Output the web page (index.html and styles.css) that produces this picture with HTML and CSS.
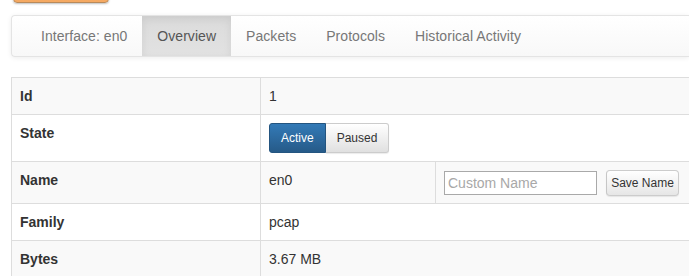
FILE: index.html
```html
<!DOCTYPE html>
<html>
<head>
    <title>Interface en0</title>
    <meta name="viewport" content="width=device-width, initial-scale=1">
    <link rel="stylesheet" href="styles.css">
</head>
<body>
    <div class="page">
        <div class="top-btn"></div>

        <nav class="navbar">
            <ul class="nav">
                <li><a href="#">Interface: en0</a></li>
                <li class="active"><a href="#">Overview</a></li>
                <li><a href="#">Packets</a></li>
                <li><a href="#">Protocols</a></li>
                <li><a href="#">Historical Activity</a></li>
            </ul>
        </nav>

        <table class="info-table">
            <colgroup>
                <col class="col-label">
                <col class="col-value">
                <col>
            </colgroup>
            <tr>
                <th>Id</th>
                <td colspan="2">1</td>
            </tr>
            <tr>
                <th>State</th>
                <td colspan="2">
                    <div class="btn-group">
                        <button class="btn btn-primary">Active</button><button class="btn btn-default">Paused</button>
                    </div>
                </td>
            </tr>
            <tr>
                <th>Name</th>
                <td>en0</td>
                <td>
                    <div class="name-form">
                        <input type="text" class="name-input" placeholder="Custom Name">
                        <button class="btn btn-default btn-save">Save Name</button>
                    </div>
                </td>
            </tr>
            <tr>
                <th>Family</th>
                <td colspan="2">pcap</td>
            </tr>
            <tr>
                <th>Bytes</th>
                <td colspan="2">3.67 MB</td>
            </tr>
        </table>
    </div>
</body>
</html>
```

FILE: styles.css
```css
* {
    box-sizing: border-box;
}

html, body {
    overflow: hidden;
}

body {
    margin: 0;
    background: #fff;
    color: #333;
    font-family: "Liberation Sans", Arial, Helvetica, sans-serif;
    font-size: 14px;
    line-height: 20px;
}

/* the page is cropped on the right, so the right edges have no border */
.page {
    padding-left: 11px;
}

.top-btn {
    width: 96px;
    height: 34px;
    margin-top: -31px;
    margin-left: 2px;
    background: linear-gradient(#f0ad4e, #f5a963);
    border: 1px solid #b98a5a;
    border-radius: 4px;
    box-shadow: 0 1px 2px rgba(0, 0, 0, 0.25);
}

.navbar {
    margin-top: 12px;
    margin-bottom: 20px;
    height: 42px;
    background: linear-gradient(#ffffff, #f8f8f8);
    border: 1px solid #e4e4e4;
    border-right: none;
    border-radius: 4px 0 0 4px;
    box-shadow: inset 0 1px 0 rgba(255, 255, 255, 0.15), 0 1px 5px rgba(0, 0, 0, 0.075);
}

.nav {
    display: flex;
    list-style: none;
    margin: 0;
    padding: 0 0 0 14px;
}

.nav a {
    display: block;
    padding: 10px 15px;
    color: #777;
    text-decoration: none;
    letter-spacing: 0.05px;
}

.nav .active a {
    color: #555;
    background: linear-gradient(#dbdbdb, #e2e2e2);
    box-shadow: inset 0 3px 9px rgba(0, 0, 0, 0.075);
}

.info-table {
    width: 100%;
    border-collapse: collapse;
    table-layout: fixed;
    border: 1px solid #ddd;
    border-right: none;
}

.col-label {
    width: 249px;
}

.col-value {
    width: 175px;
}

.info-table th,
.info-table td {
    padding: 8px;
    border: 1px solid #ddd;
    text-align: left;
    vertical-align: top;
    line-height: 20px;
}

.info-table td:last-child {
    border-right: none;
}

.info-table th {
    font-weight: bold;
}

.info-table tr:nth-child(odd) {
    background: #f9f9f9;
}

.btn-group {
    display: flex;
}

.btn {
    font-family: inherit;
    font-size: 12px;
    line-height: 18px;
    padding: 5px 11px;
    height: 30px;
    border: 1px solid #ccc;
    cursor: pointer;
}

.btn-primary {
    color: #fff;
    background: linear-gradient(#337ab7, #265a88);
    border-color: #245580;
    border-radius: 3px 0 0 3px;
}

.btn-default {
    color: #333;
    background: linear-gradient(#ffffff, #e0e0e0);
    border-color: #ccc;
    border-radius: 0 3px 3px 0;
    border-left: none;
    box-shadow: 0 1px 1px rgba(0, 0, 0, 0.08);
}

.name-form {
    display: flex;
    align-items: center;
    gap: 9px;
    height: 25px;
}

.name-input {
    width: 153px;
    height: 24px;
    margin: 0;
    padding: 1px 3px;
    font-family: inherit;
    font-size: 14px;
    color: #333;
    border: 1px solid #a9a9a9;
    border-radius: 0;
    background: #fff;
}

.name-input::placeholder {
    color: #a8a8a8;
}

.btn-save {
    height: 26px;
    width: 73px;
    padding: 3px 0;
    line-height: 18px;
    border-left: 1px solid #c6c6c6;
    border-radius: 4px;
    background: linear-gradient(#ffffff, #e6e6e6);
}
```
